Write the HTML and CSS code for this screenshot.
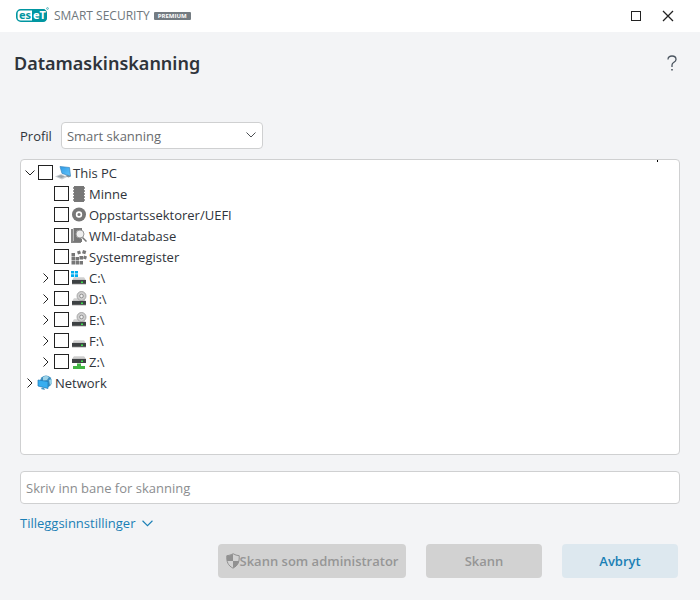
FILE: index.html
```html
<!DOCTYPE html>
<html lang="no">
<head>
<meta charset="utf-8">
<title>Datamaskinskanning</title>
<link rel="stylesheet" href="styles.css">
</head>
<body>
<svg class="defs" aria-hidden="true">
  <defs>
    <linearGradient id="drive-top" x1="0" y1="0" x2="0" y2="1"><stop offset="0" stop-color="#e2e2e2"/><stop offset="1" stop-color="#b9b9b9"/></linearGradient>
    <linearGradient id="screen" x1="0" y1="0" x2="1" y2="1"><stop offset="0" stop-color="#2f9be6"/><stop offset="1" stop-color="#62c4fb"/></linearGradient>
    <symbol id="down" viewBox="0 0 10 6"><path d="M.5.5 5 5 9.500.5" fill="none" stroke="currentColor"/></symbol>
    <symbol id="right" viewBox="0 0 6 10"><path d="M.5.5 5 5 .5 9.500" fill="none" stroke="currentColor"/></symbol>
    <symbol id="drive" viewBox="0 0 16 16"><path d="M3 7h10l2 3.500H1z" fill="url(#drive-top)"/><path d="M1 10h14v4H1z" fill="#3d4143"/><path d="M1 13.500h14v.8H1z" fill="#777"/><path d="M10 11.500h2v1.500h-2z" fill="#3be04a"/></symbol>
    <symbol id="disc-drive" viewBox="0 0 16 16"><use href="#drive"/><circle cx="10.500" cy="5" r="4.500" fill="#cfcfcf" stroke="#9b9b9b" stroke-width=".8"/><circle cx="10.500" cy="5" r="1.800" fill="#f4f4f4" stroke="#888" stroke-width=".9"/></symbol>
  </defs>
</svg>
<header class="titlebar">
  <div class="brand">
    <svg class="logo" viewBox="0 0 33 16" role="img" aria-label="eset">
      <rect x=".8" y="2.800" width="29.400" height="11.400" rx="4" fill="#fff" stroke="#0096a1" stroke-width="1.600"/>
      <path d="M16 2h10.500Q31 2 31 6.500v4Q31 15 26.500 15H16z" fill="#0096a1"/>
      <text x="3" y="12" class="logo-text teal">es</text>
      <text x="17" y="12" class="logo-text white">eT</text>
      <circle cx="31.500" cy="1.500" r=".9" fill="none" stroke="#0096a1" stroke-width=".6"/>
    </svg>
    <span class="product">SMART SECURITY</span>
    <span class="edition">PREMIUM</span>
  </div>
  <div class="window-buttons">
    <button type="button" aria-label="Maksimer"><svg width="12" height="12" viewBox="0 0 12 12"><rect x="1.500" y="1.500" width="9" height="9" fill="none" stroke="#222"/></svg></button>
    <button type="button" aria-label="Lukk"><svg width="12" height="12" viewBox="0 0 12 12"><path d="m1 1 10 10M11 1 1 11" stroke="#222" stroke-width="1.300"/></svg></button>
  </div>
</header>
<main>
  <div class="heading">
    <h1>Datamaskinskanning</h1>
    <button type="button" class="help" aria-label="Hjelp"><svg width="10" height="16" viewBox="0 0 10 16"><path d="M1 4.500C1 2 2.700 1 5 1s4 1.200 4 3.400C9 7.300 5 7.300 5 10v2" fill="none" stroke="#4b5560" stroke-width="1.300"/><path d="M4.200 14h1.600v1.600H4.200z" fill="#4b5560"/></svg></button>
  </div>
  <form>
    <div class="profile">
      <label for="profile">Profil</label>
      <div class="select-box">
        <select id="profile"><option>Smart skanning</option></select>
        <svg class="select-arrow" width="10" height="6"><use href="#down"/></svg>
      </div>
    </div>
    <div class="tree">
      <ul>
        <li>
          <div class="row"><button type="button" class="toggle" aria-label="Skjul This PC"><svg width="10" height="6"><use href="#down"/></svg></button><input type="checkbox" id="pc"><label for="pc"><svg class="icon" viewBox="0 0 16 16"><path d="M0 11.500 6 9l6 3-5 2.500z" fill="#c9ced2"/><path d="m2 11.500 4-1.500 4 1.800L6.500 13z" fill="#9aa3a9"/><path d="m10 11 3.500 1.500 2.500-1-3-2z" fill="#8a949b"/><path d="m5 1.500 9.500 1 1 8.500L7 8.500z" fill="url(#screen)" stroke="#3a86bf" stroke-width=".7"/></svg>This PC</label></div>
          <ul>
            <li class="row"><span class="toggle"></span><input type="checkbox" id="mem"><label for="mem"><svg class="icon" viewBox="0 0 16 16"><path d="M3 0h10v16H3z" fill="#777"/><path d="M2 2h12M2 5h12M2 8h12M2 11h12M2 14h12" stroke="#777" stroke-width="1.600"/></svg>Minne</label></li>
            <li class="row"><span class="toggle"></span><input type="checkbox" id="boot"><label for="boot"><svg class="icon" viewBox="0 0 16 16"><circle cx="8" cy="7.500" r="7" fill="#777"/><circle cx="8" cy="7.500" r="2.400" fill="#777" stroke="#fff" stroke-width="1.600"/></svg>Oppstartssektorer/UEFI</label></li>
            <li class="row"><span class="toggle"></span><input type="checkbox" id="wmi"><label for="wmi"><svg class="icon" viewBox="0 0 16 16"><path d="M0 1h2v12h8v2H0z" fill="#888"/><path d="M2.500 0H11v14H2.500z" fill="#777"/><path d="m10.500 8.500 5 5" stroke="#fff" stroke-width="3"/><path d="m10.500 8.500 5 5" stroke="#777" stroke-width="1.500"/><circle cx="9" cy="6" r="4" fill="#eee" stroke="#999"/></svg>WMI-database</label></li>
            <li class="row"><span class="toggle"></span><input type="checkbox" id="reg"><label for="reg"><svg class="icon" viewBox="0 0 16 16" fill="#777"><path d="M.5 4h3.500v3.500H.5zM.5 8h3.500v3.500H.5zM.5 12h3.500v3.500H.5zM4.500 8H8v3.500H4.500zM4.500 12H8v3.500H4.500zM8.500 12H12v3.500H8.500zM8.500 7H12v3.500H8.500zM6 2.500l3-1 1 3-3 1zM12 1l3.300 1-1 3.300-3.300-1zM13 6.500l3 1-1 3-3-1z"/></svg>Systemregister</label></li>
            <li class="row"><button type="button" class="toggle" aria-label="Vis C:"><svg width="6" height="10"><use href="#right"/></svg></button><input type="checkbox" id="c"><label for="c"><svg class="icon" viewBox="0 0 16 16"><use href="#drive"/><path d="M0 1h3v2.500H0zM3.800 1H7v2.500H3.800zM0 4.300h3V7H0zM3.800 4.300H7V7H3.800z" fill="#00adef"/></svg>C:\</label></li>
            <li class="row"><button type="button" class="toggle" aria-label="Vis D:"><svg width="6" height="10"><use href="#right"/></svg></button><input type="checkbox" id="d"><label for="d"><svg class="icon"><use href="#disc-drive"/></svg>D:\</label></li>
            <li class="row"><button type="button" class="toggle" aria-label="Vis E:"><svg width="6" height="10"><use href="#right"/></svg></button><input type="checkbox" id="e"><label for="e"><svg class="icon"><use href="#disc-drive"/></svg>E:\</label></li>
            <li class="row"><button type="button" class="toggle" aria-label="Vis F:"><svg width="6" height="10"><use href="#right"/></svg></button><input type="checkbox" id="f"><label for="f"><svg class="icon"><use href="#drive"/></svg>F:\</label></li>
            <li class="row"><button type="button" class="toggle" aria-label="Vis Z:"><svg width="6" height="10"><use href="#right"/></svg></button><input type="checkbox" id="z"><label for="z"><svg class="icon" viewBox="0 0 16 16"><path d="M3 2h10l2 3H1z" fill="url(#drive-top)"/><path d="M1 5h14v4H1z" fill="#3d4143"/><path d="M10 6.500h2V8h-2z" fill="#3be04a"/><path d="M6 9.500h4V12h4v3H2v-3h4z" fill="#42b543"/></svg>Z:\</label></li>
          </ul>
        </li>
        <li class="row"><button type="button" class="toggle" aria-label="Vis Network"><svg width="6" height="10"><use href="#right"/></svg></button><span class="node"><svg class="icon" viewBox="0 0 16 16"><circle cx="9" cy="6.500" r="6" fill="#3d8fc0"/><path d="M6 2q3-2 6 0l-2 3-4 1zM12 5l3-1v4l-2 2z" fill="#9dd3e8"/><path d="m1 5 10 1.500v7L1 11z" fill="#37aef0" stroke="#1b78b8" stroke-width=".7"/><path d="m5 12.500 2 .5 1 2-4-1z" fill="#4594c2"/></svg>Network</span></li>
      </ul>
    </div>
    <input type="text" class="path" placeholder="Skriv inn bane for skanning" aria-label="Bane for skanning">
    <a href="#" class="advanced">Tilleggsinnstillinger <svg width="11" height="7"><use href="#down"/></svg></a>
    <div class="actions">
      <button type="button" class="admin" disabled><svg width="14" height="16" viewBox="0 0 14 16"><path d="M7 .7Q10 2.500 13.200 2.700C13.500 9 12 12.500 7 15.200 2 12.500.5 9 .8 2.700 4 2.500 7 .7 7 .7z" fill="#d2d2d2" stroke="#919191"/><path d="M7 1v7H1Q.5 5 1 3 4 2.700 7 1zM7 8h6q-1 5-6 7z" fill="#919191"/></svg>Skann som administrator</button>
      <button type="submit" disabled>Skann</button>
      <button type="button" class="cancel">Avbryt</button>
    </div>
  </form>
</main>
</body>
</html>
```
FILE: styles.css
```css
* { box-sizing: border-box; }
body {
  margin: 0;
  min-height: 100vh;
  display: flex;
  flex-direction: column;
  background: #f3f4f6;
  color: #2f343b;
  font: 13px/20px "Open Sans", "Noto Sans", sans-serif;
}
button, input, select { font: inherit; color: inherit; }
button { border: 0; padding: 0; background: none; }
svg { display: block; flex: none; }
.defs { position: absolute; width: 0; height: 0; }

.titlebar {
  display: flex;
  justify-content: space-between;
  align-items: center;
  height: 32px;
  padding: 0 20px 0 16px;
  background: #fff;
}
.brand { display: flex; align-items: center; }
.logo { width: 33px; height: 16px; margin-bottom: 2px; }
.logo-text { font: bold 11px "Noto Sans", sans-serif; }
.teal { fill: #0096a1; }
.white { fill: #fff; }
.product { margin-left: 5px; font-size: 12px; line-height: 16px; color: #6f777c; }
.edition {
  margin-left: 4px;
  padding: 0 4px;
  border-radius: 1px;
  background: #747c82;
  color: #fff;
  font-size: 6px;
  line-height: 8px;
  font-weight: 700;
}
.window-buttons { display: flex; gap: 8px; }
.window-buttons button { display: grid; place-items: center; width: 24px; height: 24px; }

main { flex: 1; display: flex; flex-direction: column; padding: 16px 20px 22px; }
.heading { display: flex; justify-content: space-between; align-items: center; margin-left: -6px; }
h1 { margin: 0; font-family: "Noto Sans", sans-serif; font-size: 18px; line-height: 30px; font-weight: 600; }
.help { padding: 0 3px; }

form { flex: 1; display: flex; flex-direction: column; margin-top: 44px; }
.profile { display: flex; align-items: center; gap: 9px; }
.select-box { position: relative; width: 202px; }
select {
  display: block;
  width: 100%;
  height: 27px;
  padding: 0 24px 0 5px;
  border: 1px solid #cfd0d1;
  border-radius: 4px;
  background: #fff;
  color: #686b6e;
  appearance: none;
}
.select-arrow { position: absolute; right: 7px; top: 10px; color: #4b4f53; }

.tree {
  position: relative;
  flex: 1;
  margin-top: 10px;
  padding: 2px 1px;
  border: 1px solid #cfd0d1;
  border-radius: 4px;
  background: #fff;
}
.tree::after { content: ""; position: absolute; top: 0; right: 21px; width: 1px; height: 2px; background: #000; }
.tree ul { margin: 0; padding: 0; list-style: none; }
.tree ul ul { padding-left: 16px; }
.row { display: flex; align-items: center; height: 21px; }
.toggle { display: grid; place-items: center; flex: none; width: 15px; height: 20px; color: #222; }
.row input {
  flex: none;
  width: 15px;
  height: 15px;
  margin: 0 2px 0 1px;
  border: 1px solid #222;
  background: #fff;
  appearance: none;
}
.row label, .node { display: flex; align-items: center; gap: 2px; }
.icon { width: 16px; height: 16px; }

.path {
  height: 33px;
  margin-top: 16px;
  padding: 0 5px;
  border: 1px solid #cfd0d1;
  border-radius: 4px;
  background: #fff;
}
.path::placeholder { color: #8b8d8f; opacity: 1; }
.advanced {
  display: flex;
  align-items: center;
  align-self: flex-start;
  gap: 7px;
  margin-top: 9px;
  color: #1a7fb5;
  text-decoration: none;
}
.actions { display: flex; justify-content: flex-end; gap: 20px; margin: 11px 2px 0 0; }
.actions button {
  display: flex;
  align-items: center;
  justify-content: center;
  min-width: 116px;
  height: 34px;
  padding: 0 4px;
  border-radius: 4px;
  background: #d2d2d2;
  color: #969696;
  font-weight: 600;
}
.actions .admin { min-width: 188px; }
.actions .cancel { background: #dde8ef; color: #1a7fb5; }
```
